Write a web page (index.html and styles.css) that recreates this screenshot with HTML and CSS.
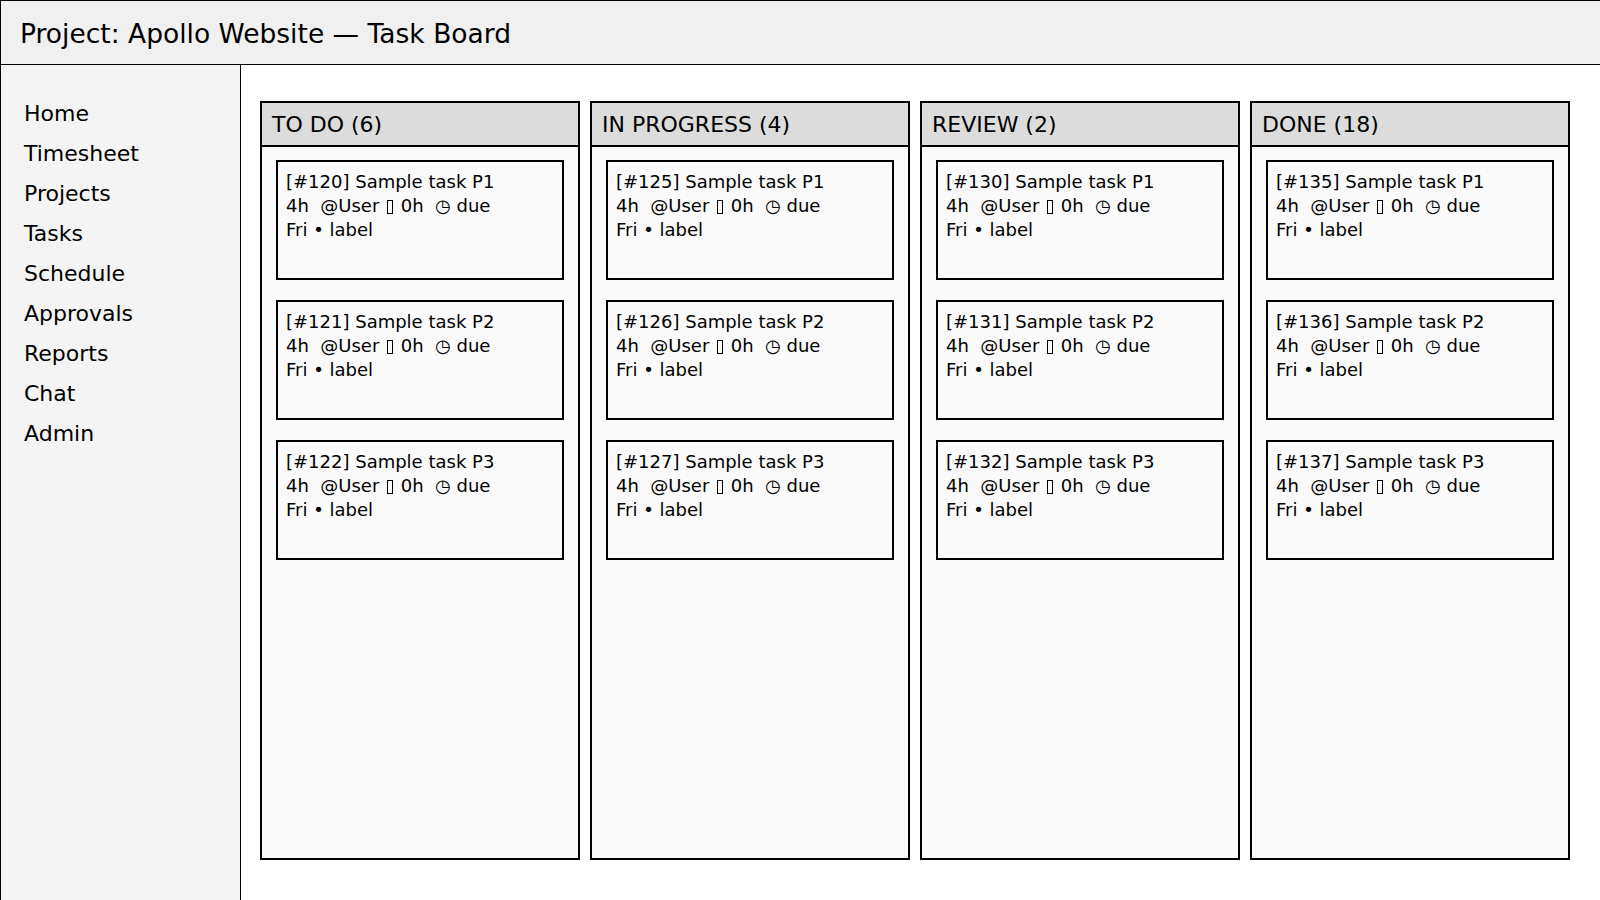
FILE: index.html
```html
<!DOCTYPE html>
<html lang="en">
<head>
<meta charset="utf-8">
<title>Task Board</title>
<link rel="stylesheet" href="styles.css">
</head>
<body>
<header class="topbar"><h1 class="title">Project: Apollo Website — Task Board</h1></header>
<div class="layout">
  <nav class="sidebar">
    <ul class="nav">
      <li>Home</li>
      <li>Timesheet</li>
      <li>Projects</li>
      <li>Tasks</li>
      <li>Schedule</li>
      <li>Approvals</li>
      <li>Reports</li>
      <li>Chat</li>
      <li>Admin</li>
    </ul>
  </nav>
  <main class="main">
    <div class="board">
      <section class="column">
        <div class="col-head">TO DO (6)</div>
        <div class="col-body">
          <div class="card"><div class="line">[#120] Sample task P1</div><div class="line">4h  @User <span class="tofu"></span> 0h  ◷ due</div><div class="line">Fri • label</div></div>
          <div class="card"><div class="line">[#121] Sample task P2</div><div class="line">4h  @User <span class="tofu"></span> 0h  ◷ due</div><div class="line">Fri • label</div></div>
          <div class="card"><div class="line">[#122] Sample task P3</div><div class="line">4h  @User <span class="tofu"></span> 0h  ◷ due</div><div class="line">Fri • label</div></div>
        </div>
      </section>
      <section class="column">
        <div class="col-head">IN PROGRESS (4)</div>
        <div class="col-body">
          <div class="card"><div class="line">[#125] Sample task P1</div><div class="line">4h  @User <span class="tofu"></span> 0h  ◷ due</div><div class="line">Fri • label</div></div>
          <div class="card"><div class="line">[#126] Sample task P2</div><div class="line">4h  @User <span class="tofu"></span> 0h  ◷ due</div><div class="line">Fri • label</div></div>
          <div class="card"><div class="line">[#127] Sample task P3</div><div class="line">4h  @User <span class="tofu"></span> 0h  ◷ due</div><div class="line">Fri • label</div></div>
        </div>
      </section>
      <section class="column">
        <div class="col-head">REVIEW (2)</div>
        <div class="col-body">
          <div class="card"><div class="line">[#130] Sample task P1</div><div class="line">4h  @User <span class="tofu"></span> 0h  ◷ due</div><div class="line">Fri • label</div></div>
          <div class="card"><div class="line">[#131] Sample task P2</div><div class="line">4h  @User <span class="tofu"></span> 0h  ◷ due</div><div class="line">Fri • label</div></div>
          <div class="card"><div class="line">[#132] Sample task P3</div><div class="line">4h  @User <span class="tofu"></span> 0h  ◷ due</div><div class="line">Fri • label</div></div>
        </div>
      </section>
      <section class="column">
        <div class="col-head">DONE (18)</div>
        <div class="col-body">
          <div class="card"><div class="line">[#135] Sample task P1</div><div class="line">4h  @User <span class="tofu"></span> 0h  ◷ due</div><div class="line">Fri • label</div></div>
          <div class="card"><div class="line">[#136] Sample task P2</div><div class="line">4h  @User <span class="tofu"></span> 0h  ◷ due</div><div class="line">Fri • label</div></div>
          <div class="card"><div class="line">[#137] Sample task P3</div><div class="line">4h  @User <span class="tofu"></span> 0h  ◷ due</div><div class="line">Fri • label</div></div>
        </div>
      </section>
    </div>
  </main>
</div>
</body>
</html>
```
FILE: styles.css
```css
* { box-sizing: border-box; }
html, body { margin: 0; padding: 0; }
body {
  width: 1600px;
  height: 900px;
  overflow: hidden;
  font-family: "DejaVu Sans", sans-serif;
  color: #000;
  background: #fff;
  display: flex;
  flex-direction: column;
}
.topbar {
  height: 65px;
  flex: none;
  background: #f0f0f0;
  border: 1px solid #000;
  border-right: none;
  padding: 18px 0 0 19px;
}
.title {
  margin: 0;
  font-size: 26.5px;
  font-weight: normal;
  line-height: 30px;
}
.layout {
  flex: 1;
  display: flex;
  min-height: 0;
}
.sidebar {
  width: 241px;
  flex: none;
  background: #f4f4f4;
  border-left: 1px solid #000;
  border-right: 1px solid #000;
  padding: 29px 0 0 23px;
}
.nav {
  list-style: none;
  margin: 0;
  padding: 0;
  font-size: 22px;
  line-height: 40px;
}
.main {
  flex: 1;
  padding: 36px 30px 40px 19px;
  display: flex;
}
.board {
  display: flex;
  gap: 10px;
  align-items: stretch;
}
.column {
  width: 320px;
  display: flex;
  flex-direction: column;
  border: 2px solid #000;
  background: #fafafa;
}
.col-head {
  background: #dcdcdc;
  border-bottom: 2px solid #000;
  font-size: 22px;
  line-height: 26px;
  padding: 9px 10px 7px;
}
.col-body {
  flex: 1;
  padding: 13px 14px;
  display: flex;
  flex-direction: column;
  gap: 20px;
}
.card {
  height: 120px;
  border: 2px solid #000;
  background: #fafafa;
  padding: 8px 8px 0;
  font-size: 18px;
  line-height: 24px;
}
.line {
  white-space: pre;
}
.tofu {
  display: inline-block;
  width: 6px;
  height: 14px;
  margin: 0 2px 0 2px;
  vertical-align: -2px;
  border: 1px solid #000;
}
```
